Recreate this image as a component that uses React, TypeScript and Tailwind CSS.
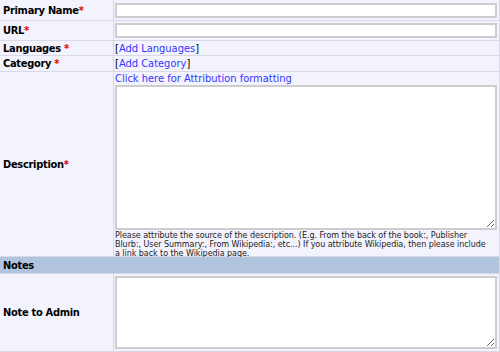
const Req = ({ space = false }: { space?: boolean }) => (
    <span className="text-[#d40000]">{space ? "\u00a0*" : "*"}</span>
);

const Label = ({ children, className = "" }: { children: React.ReactNode; className?: string }) => (
    <div className={`bg-[#f3f3fd] px-[3px] font-bold flex items-center tracking-[-0.3px] ${className}`}>
        {children}
    </div>
);

const Cell = ({ children, className = "" }: { children: React.ReactNode; className?: string }) => (
    <div className={`bg-[#f3f3fd] pl-[1px] pr-[2px] min-w-0 ${className}`}>{children}</div>
);

const inputClass =
    "block w-full h-[15px] bg-white border-2 border-[#cdcdcd] outline-none";

export default function App() {
    return (
        <div
            className="w-[500px] h-[352px] bg-white text-black text-[11px] leading-[13px]"
            style={{ fontFamily: '"DejaVu Sans Condensed", "DejaVu Sans", sans-serif' }}
        >
            <div className="grid grid-cols-[113px_minmax(0,1fr)] gap-px bg-[#d8d8e8] pr-px pb-px">
                <Label className="h-[20px]">
                    Primary Name<Req />
                </Label>
                <Cell className="h-[20px] flex items-center">
                    <input className={inputClass} />
                </Cell>

                <Label className="h-[19px]">
                    URL<Req />
                </Label>
                <Cell className="h-[19px] flex items-center">
                    <input className={inputClass} />
                </Cell>

                <Label className="h-[14px]">
                    Languages<Req space />
                </Label>
                <Cell className="h-[14px] flex items-center">
                    [<span className="text-[#3333ff]">Add Languages</span>]
                </Cell>

                <Label className="h-[15px]">
                    Category<Req space />
                </Label>
                <Cell className="h-[15px] flex items-center">
                    [<span className="text-[#3333ff]">Add Category</span>]
                </Cell>

                <Label className="h-[184px]">
                    Description<Req />
                </Label>
                <Cell className="h-[184px] pt-[1px]">
                    <div className="text-[#3333ff] h-[12px] leading-[12px]">
                        Click here for Attribution formatting
                    </div>
                    <textarea className="block w-full h-[145px] bg-white border-2 border-[#cdcdcd] outline-none" />
                    <div
                        className="text-[8px] leading-[9px] text-[#222] mt-[1px] tracking-[-0.05px] whitespace-nowrap"
                        style={{ fontFamily: '"DejaVu Sans", sans-serif' }}
                    >
                        Please attribute the source of the description. (E.g. From the back of the book:, Publisher
                        <br />
                        Blurb:, User Summary:, From Wikipedia:, etc...) If you attribute Wikipedia, then please include
                        <br />
                        a link back to the Wikipedia page.
                    </div>
                </Cell>

                <div className="col-span-2 h-[16px] bg-[#b0c4de] px-[3px] font-bold flex items-center tracking-[-0.3px]">
                    Notes
                </div>

                <Label className="h-[77px]">Note to Admin</Label>
                <Cell className="h-[77px] flex items-center">
                    <textarea className="block w-full h-[73px] bg-white border-2 border-[#cdcdcd] outline-none" />
                </Cell>
            </div>
        </div>
    );
}
